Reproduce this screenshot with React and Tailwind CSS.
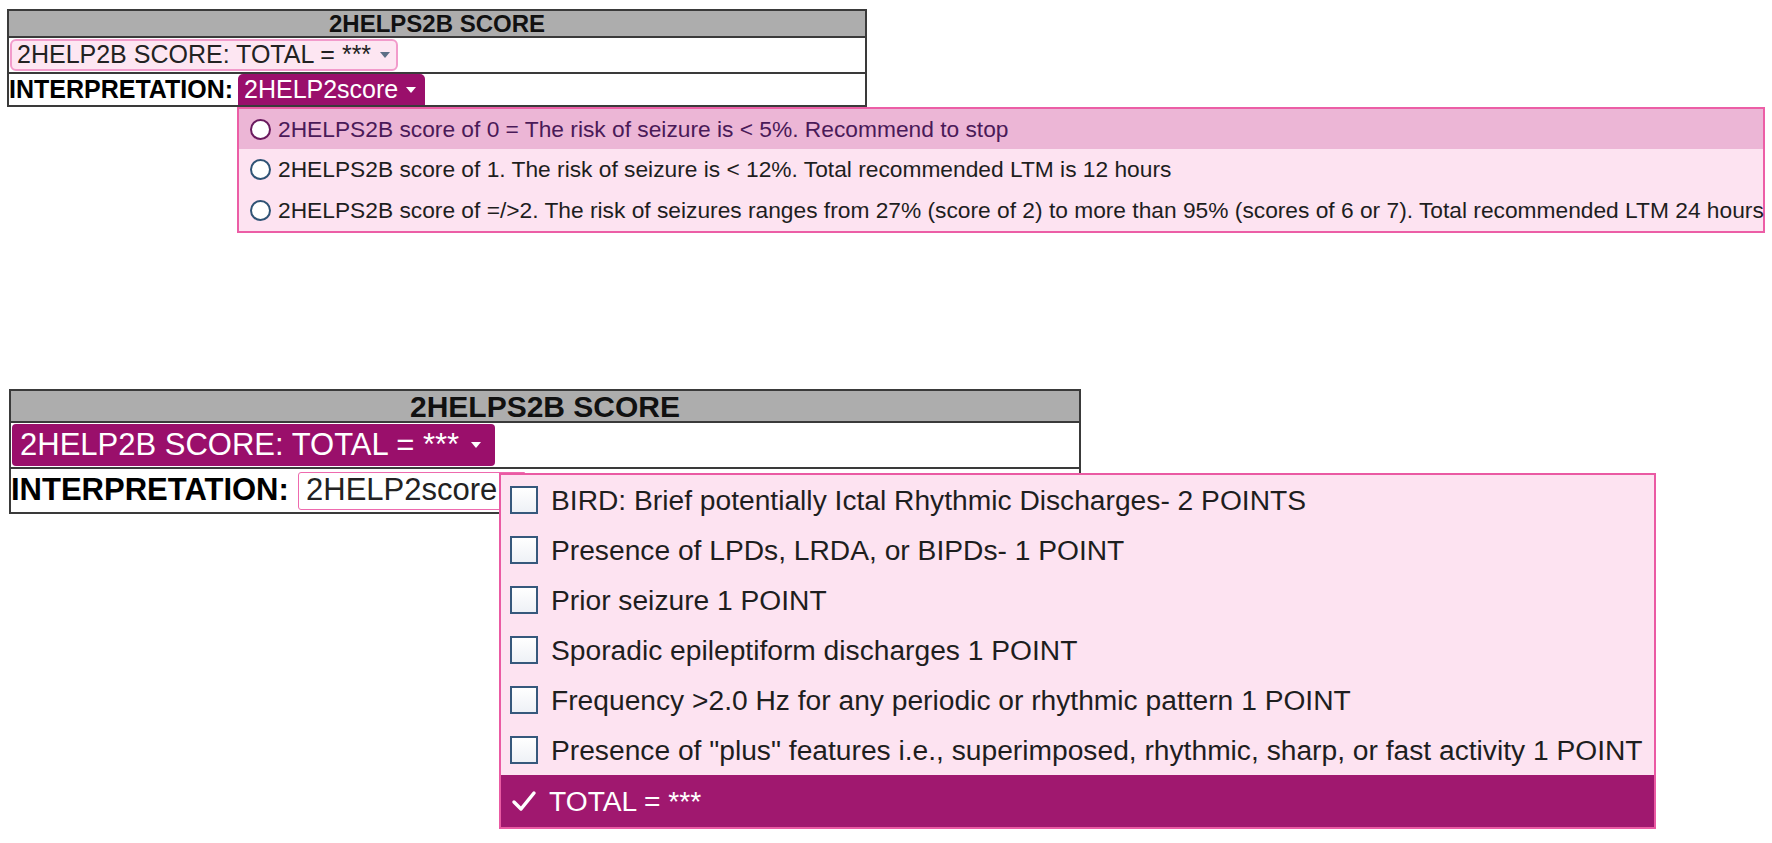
import React from "react";

const interpretations = [
  "2HELPS2B score of 0 = The risk of seizure is < 5%. Recommend to stop",
  "2HELPS2B score of 1. The risk of seizure is < 12%. Total recommended LTM is 12 hours",
  "2HELPS2B score of =/>2. The risk of seizures ranges from 27% (score of 2) to more than 95% (scores of 6 or 7). Total recommended LTM 24 hours",
];

const criteria = [
  "BIRD: Brief potentially Ictal Rhythmic Discharges- 2 POINTS",
  "Presence of LPDs, LRDA, or BIPDs- 1 POINT",
  "Prior seizure 1 POINT",
  "Sporadic epileptiform discharges 1 POINT",
  "Frequency >2.0 Hz for any periodic or rhythmic pattern 1 POINT",
  'Presence of "plus" features i.e., superimposed, rhythmic, sharp, or fast activity 1 POINT',
];

const Caret = ({ className }) => (
  <svg width="10" height="6" viewBox="0 0 10 6" className={className}>
    <path d="M0 0 L10 0 L5 6 Z" fill="currentColor" />
  </svg>
);

const TopPanel = () => (
  <div className="w-[860px] border-2 border-[#3a3a3a] bg-white">
    <div className="h-[27px] bg-[#adadad] border-b-2 border-[#3a3a3a] flex items-center justify-center font-bold text-[24px] text-[#111]">
      2HELPS2B SCORE
    </div>
    <div className="h-[36px] border-b-2 border-[#3a3a3a] flex items-center pl-px">
      <div className="h-[32px] w-[388px] flex items-center gap-[9px] rounded-[6px] border-2 border-[#f29bcb] bg-[#fde6f2] pl-[5px] text-[25px] text-[#222]">
        <span>2HELP2B SCORE: TOTAL = ***</span>
        <Caret className="text-[#5d6f86]" />
      </div>
    </div>
    <div className="h-[31px] flex items-center">
      <div className="w-[229px] font-bold text-[25px] text-black whitespace-nowrap">
        INTERPRETATION:
      </div>
      <div className="relative">
        <div className="h-[31px] w-[187px] flex items-center gap-[8px] rounded-t-[5px] bg-[#9a0f6b] pl-[6px] text-[25px] text-white">
          <span>2HELP2score</span>
          <Caret className="text-white" />
        </div>
        <div className="absolute left-[-1px] top-[33px] z-10 w-[1528px] border-2 border-[#ec5ea6] bg-[#fde3f1]">
          {interpretations.map((text, i) => (
            <div
              key={i}
              className={
                i === 0
                  ? "h-[40px] flex items-center gap-[7px] pl-[11px] bg-[#ecb6d6] text-[#4a1a58]"
                  : "h-[41px] flex items-center gap-[7px] pl-[11px] text-[#1e1e1e]"
              }
            >
              <span
                className={
                  i === 0
                    ? "w-[21px] h-[21px] shrink-0 rounded-full border-2 border-[#6a1a5e] bg-white"
                    : "w-[21px] h-[21px] shrink-0 rounded-full border-2 border-[#2f5375] bg-white"
                }
              />
              <span className="text-[22.75px] whitespace-nowrap">{text}</span>
            </div>
          ))}
        </div>
      </div>
    </div>
  </div>
);

const BottomPanel = () => (
  <div className="relative ml-[2px] mt-[282px] w-[1072px] border-2 border-[#3a3a3a] bg-white">
    <div className="h-[32px] bg-[#adadad] border-b-2 border-[#3a3a3a] flex items-center justify-center font-bold text-[30px] text-[#111]">
      2HELPS2B SCORE
    </div>
    <div className="h-[46px] border-b-2 border-[#3a3a3a] flex items-center pl-px">
      <div className="h-[42px] w-[483px] flex items-center gap-[12px] rounded-[4px] bg-[#9a0f6b] pl-[8px] text-[31px] text-white">
        <span>2HELP2B SCORE: TOTAL = ***</span>
        <Caret className="text-white" />
      </div>
    </div>
    <div className="h-[43px] flex items-center">
      <div className="w-[287px] font-bold text-[31px] text-black whitespace-nowrap">
        INTERPRETATION:
      </div>
      <div className="h-[38px] flex items-center gap-[10px] rounded-l-[3px] border border-[#ee6aae] bg-white px-[7px] text-[31px] text-[#222]">
        <span>2HELP2score</span>
        <Caret className="text-[#5d6f86]" />
      </div>
    </div>

    <div className="absolute left-[488px] top-[82px] z-10 w-[1157px] border-2 border-[#ea5aa3] bg-[#fde3f1]">
      {criteria.map((text) => (
        <div key={text} className="h-[50px] flex items-center gap-[13px] pl-[9px]">
          <span className="w-[28px] h-[28px] shrink-0 border-2 border-[#36587c] bg-gradient-to-b from-white to-[#eef1f6]" />
          <span className="text-[28.2px] text-[#1e1e1e] whitespace-nowrap">{text}</span>
        </div>
      ))}
      <div className="h-[52px] flex items-center gap-[12px] pl-[10px] bg-[#a0186f] text-white">
        <svg width="26" height="24" viewBox="0 0 26 24" className="shrink-0">
          <path d="M3 13 L10 20 L23 4" fill="none" stroke="white" strokeWidth="3.5" strokeLinecap="round" strokeLinejoin="round" />
        </svg>
        <span className="text-[28.2px] whitespace-nowrap">TOTAL = ***</span>
      </div>
    </div>
  </div>
);

export default function App() {
  return (
    <div className="min-h-[843px] w-[1772px] bg-white pl-[7px] pt-[9px] font-['Liberation_Sans',Arial,sans-serif]">
      <TopPanel />
      <BottomPanel />
    </div>
  );
}
